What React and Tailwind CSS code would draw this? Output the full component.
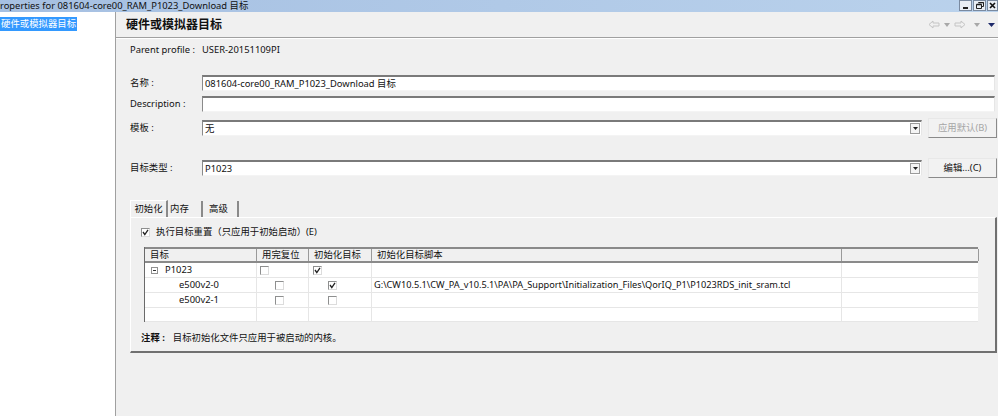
import React from 'react'

const FONT = { fontFamily: '"Noto Sans", "Noto Sans CJK SC", sans-serif' }

function Check({ checked }) {
  return (
    <span className="inline-flex w-[9px] h-[9px] shrink-0 bg-white border border-[#8e8f8f] border-r-[#dcdcdc] border-b-[#dcdcdc] items-center justify-center">
      {checked && (
        <svg width="7" height="7" viewBox="0 0 7 7">
          <path d="M1 3 L2.8 5.5 L6 0.8" stroke="#222" strokeWidth="1.3" fill="none" />
        </svg>
      )}
    </span>
  )
}

function Field({ children, className = '' }) {
  return (
    <div className={`h-[16px] bg-white border-t-2 border-l border-t-[#7a7a7a] border-l-[#8a8a8a] border-b border-r border-b-[#f4f4f4] border-r-[#e6e6e6] flex items-center pl-[2px] whitespace-nowrap ${className}`}>
      {children}
    </div>
  )
}

function Combo({ value }) {
  return (
    <Field className="flex-1 pr-[1px]">
      <span className="flex-1">{value}</span>
      <span className="w-[10px] h-[11px] border border-[#9a9a9a] bg-[#f4f4f4] flex items-center justify-center">
        <svg width="5" height="3" viewBox="0 0 5 3"><path d="M0 0 H5 L2.5 3 Z" fill="#222" /></svg>
      </span>
    </Field>
  )
}

function Btn({ children, disabled }) {
  return (
    <div className={`w-[69px] h-[20px] ml-[6px] flex items-center justify-center whitespace-nowrap bg-[#f2f2f2] border border-[#e8e8e8] border-r-[#8a8a8a] border-b-[#8a8a8a] ${disabled ? 'text-[#a6a6a6]' : 'text-[#111]'}`}>
      {children}
    </div>
  )
}

const COLS = 'grid grid-cols-[112px_52px_63px_470px_137px]'

const ROWS = [
  { name: 'P1023', tree: true, a: false, b: true, script: '' },
  { name: 'e500v2-0', a: false, b: true, script: 'G:\\CW10.5.1\\CW_PA_v10.5.1\\PA\\PA_Support\\Initialization_Files\\QorIQ_P1\\P1023RDS_init_sram.tcl' },
  { name: 'e500v2-1', a: false, b: false, script: '' },
  { name: '', blank: true },
]

export default function App() {
  return (
    <div className="w-[998px] h-[416px] flex flex-col overflow-hidden text-[#111] text-[9.4px] leading-[12px]" style={FONT}>
      {/* title bar */}
      <div className="h-[12px] bg-gradient-to-r from-[#a6c0e2] to-[#bad2ec] flex items-start justify-between">
        <span className="text-[9.4px] leading-[11px] whitespace-nowrap text-[#111]">roperties for 081604-core00_RAM_P1023_Download 目标</span>
        <div className="flex gap-[1px]">
          <span className="w-[13px] h-[11px] bg-[#e9eef5] border border-[#7a8aa0] flex items-end justify-center pb-[1px]"><span className="w-[5px] h-[2px] bg-[#222]" /></span>
          <span className="w-[13px] h-[11px] bg-[#e9eef5] border border-[#7a8aa0] flex items-center justify-center">
            <svg width="8" height="7" viewBox="0 0 8 7"><path d="M2.5 0.5 H7.5 V4.5 H6 M0.5 2.5 H5.5 V6.5 H0.5 Z" fill="none" stroke="#222" /><path d="M2.5 0.5 H7.5 M0.5 2.5 H5.5" stroke="#222" strokeWidth="1.6" /></svg>
          </span>
          <span className="w-[11px] h-[11px] bg-[#e9eef5] border border-[#7a8aa0] flex items-center justify-center">
            <svg width="7" height="7" viewBox="0 0 7 7"><path d="M1 1 L6 6 M6 1 L1 6" stroke="#111" strokeWidth="1.6" /></svg>
          </span>
        </div>
      </div>

      <div className="flex flex-1 min-h-0">
        {/* left tree */}
        <aside className="w-[116px] bg-white border-r border-[#a0a0a0] pt-[5px]">
          <span className="inline-block bg-[#3399ff] text-white leading-[14px] px-[1px] whitespace-nowrap">硬件或模拟器目标</span>
        </aside>

        {/* main */}
        <main className="flex-1 bg-[#f0f0f0] flex flex-col">
          <div className="h-[26px] flex items-center justify-between pl-[10px] pr-[3px] border-b border-[#a0a0a0]">
            <span className="text-[12px] font-bold">硬件或模拟器目标</span>
            <div className="flex items-center gap-[4px]">
              <svg width="12" height="9" viewBox="0 0 12 9"><path d="M1 4.5 L5 1 V3 H11 V6 H5 V8 Z" fill="none" stroke="#c4c4c4" /></svg>
              <svg width="6" height="4" viewBox="0 0 6 4"><path d="M0 0 H6 L3 4 Z" fill="#a8a8a8" /></svg>
              <svg width="12" height="9" viewBox="0 0 12 9"><path d="M11 4.5 L7 1 V3 H1 V6 H7 V8 Z" fill="none" stroke="#c4c4c4" /></svg>
              <svg width="6" height="4" viewBox="0 0 6 4" className="ml-[4px]"><path d="M0 0 H6 L3 4 Z" fill="#a8a8a8" /></svg>
              <svg width="7" height="4" viewBox="0 0 7 4" className="ml-[4px]"><path d="M0 0 H7 L3.5 4 Z" fill="#1e2a6a" /></svg>
            </div>
          </div>
          <div className="border-t border-white" />

          <div className="pl-[14px] pr-[1px] flex flex-col">
            <div className="h-[19px] mt-[1px] flex items-center whitespace-nowrap">
              <span className="w-[72px]">Parent profile :</span>
              <span>USER-20151109PI</span>
            </div>

            <div className="h-[16px] mt-[16px] flex items-center">
              <span className="w-[72px] whitespace-nowrap">名称 :</span>
              <Field className="flex-1 mr-[2px]">081604-core00_RAM_P1023_Download 目标</Field>
            </div>
            <div className="h-[16px] mt-[5px] flex items-center">
              <span className="w-[72px] whitespace-nowrap">Description :</span>
              <Field className="flex-1 mr-[2px]" />
            </div>
            <div className="h-[20px] mt-[6px] flex items-center">
              <span className="w-[72px] whitespace-nowrap">模板 :</span>
              <Combo value="无" />
              <Btn disabled>应用默认(B)</Btn>
            </div>
            <div className="h-[20px] mt-[20px] flex items-center">
              <span className="w-[72px] whitespace-nowrap">目标类型 :</span>
              <Combo value="P1023" />
              <Btn>编辑...(C)</Btn>
            </div>

            {/* tabs */}
            <div className="flex items-end mt-[22px] h-[17px] whitespace-nowrap">
              <div className="w-[38px] h-[17px] border-t border-l border-white border-r-2 border-r-[#8a8a8a] flex items-center justify-center">初始化</div>
              <div className="w-[35px] h-[16px] border-r-2 border-r-[#8a8a8a] flex items-center pl-[2px]">内存</div>
              <div className="w-[36px] h-[16px] border-r-2 border-r-[#8a8a8a] flex items-center pl-[6px]">高级</div>
            </div>

            <div className="h-[136px] border-t border-l border-white border-r-2 border-b-2 border-r-[#707070] border-b-[#707070] pl-[10px] pr-[16px] flex flex-col">
              <div className="h-[12px] mt-[8px] flex items-center gap-[6px] whitespace-nowrap">
                <Check checked />
                <span>执行目标重置（只应用于初始启动）(E)</span>
              </div>

              <div className="mt-[9px] ml-[3px] w-[834px] border-l border-[#6a6a6a] whitespace-nowrap">
                <div className={`${COLS} h-[16px] bg-[#f0f0f0] border-t-2 border-b-2 border-[#8a8a8a]`}>
                  {['目标', '用完复位', '初始化目标', '初始化目标脚本', ''].map((h, i) => (
                    <div key={i} className="border-r border-[#9a9a9a] pl-[5px] flex items-center">{h}</div>
                  ))}
                </div>
                {ROWS.map((r, i) => (
                  <div key={i} className={`${COLS} ${r.blank ? 'h-[14px]' : 'h-[15px]'} bg-white border-b border-[#e6e6e6]`}>
                    <div className="border-r border-[#e6e6e6] flex items-center">
                      {r.tree ? (
                        <span className="flex items-center pl-[6px] gap-[7px]">
                          <span className="w-[7px] h-[7px] border border-[#919191] flex items-center justify-center"><span className="w-[3px] h-[1px] bg-[#333]" /></span>
                          {r.name}
                        </span>
                      ) : (
                        <span className="pl-[34px]">{r.name}</span>
                      )}
                    </div>
                    <div className={`border-r border-[#e6e6e6] flex items-center ${r.tree ? 'pl-[3px]' : 'pl-[18px]'}`}>{!r.blank && <Check checked={r.a} />}</div>
                    <div className={`border-r border-[#e6e6e6] flex items-center ${r.tree ? 'pl-[4px]' : 'pl-[19px]'}`}>{!r.blank && <Check checked={r.b} />}</div>
                    <div className="border-r border-[#e6e6e6] flex items-center pl-[2px] text-[9.2px]">{r.script}</div>
                    <div />
                  </div>
                ))}
              </div>

              <div className="mt-[10px] flex items-center whitespace-nowrap">
                <span className="font-bold">注释 :</span>
                <span className="ml-[8px]">目标初始化文件只应用于被启动的内核。</span>
              </div>
            </div>
          </div>
        </main>
      </div>
    </div>
  )
}
